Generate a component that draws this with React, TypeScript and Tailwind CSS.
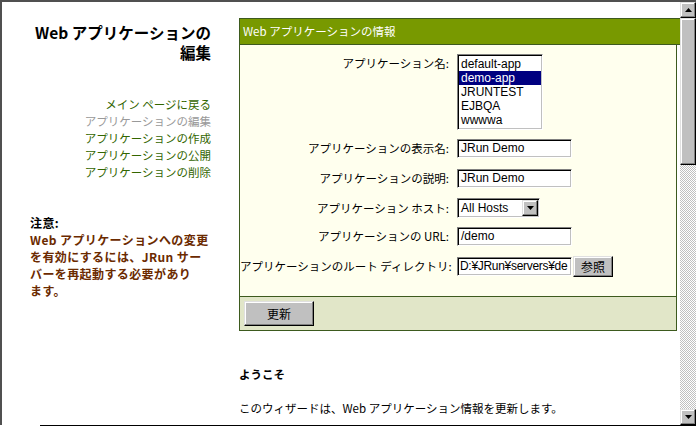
export default function App() {
  const inset =
    "border border-t-[#808080] border-l-[#808080] border-b-white border-r-white shadow-[inset_1px_1px_0_#000,inset_-1px_-1px_0_#c0c0c0]";
  const outset =
    "bg-[#c0c0c0] border border-t-[#e0e0e0] border-l-[#e0e0e0] border-b-black border-r-black shadow-[inset_-1px_-1px_0_#808080,inset_1px_1px_0_#ffffff]";
  const latin = "font-['Liberation_Sans','Noto_Sans_CJK_JP',sans-serif] text-[12px]";

  const Row = ({ label, children }: { label: string; children: React.ReactNode }) => (
    <div className="flex items-center">
      <div className="w-[209px] text-right whitespace-nowrap">{label}</div>
      <div className="ml-[8px] flex items-center">{children}</div>
    </div>
  );

  const TextBox = ({ value, tight }: { value: string; tight?: boolean }) => (
    <div
      className={`${inset} ${latin} w-[115px] h-[19px] bg-white ${tight ? "pl-[2px] tracking-[-0.3px]" : "pl-[3px]"} leading-[16px] whitespace-nowrap overflow-hidden`}
    >
      {value}
    </div>
  );

  const Arrow = ({ up }: { up?: boolean }) => (
    <svg width="7" height="4" viewBox="0 0 7 4">
      {up ? <polygon points="3.5,0 7,4 0,4" fill="#000" /> : <polygon points="0,0 7,0 3.5,4" fill="#000" />}
    </svg>
  );

  return (
    <div className="w-[696px] h-[426px] bg-white overflow-hidden font-['Noto_Sans_CJK_JP',sans-serif] text-[11.5px] leading-[17px] text-black">
      <div className="flex h-[425px] border-t-2 border-l-2 border-t-[#505050] border-l-[#505050]">
        {/* left column */}
        <div className="w-[237px] shrink-0 pt-[20px] pl-[28px] pr-[28px]">
          <div className="text-right text-[15.5px] leading-[20px] font-bold whitespace-nowrap">
            Web アプリケーションの
            <br />
            編集
          </div>
          <div className="mt-[34px] flex flex-col text-right whitespace-nowrap">
            <span className="text-[#336600]">メイン ページに戻る</span>
            <span className="text-[#999999]">アプリケーションの編集</span>
            <span className="text-[#336600]">アプリケーションの作成</span>
            <span className="text-[#336600]">アプリケーションの公開</span>
            <span className="text-[#336600]">アプリケーションの削除</span>
          </div>
          <div className="mt-[33px] font-bold text-[12px] tracking-[0.4px] leading-[17px] whitespace-nowrap">
            <div>注意:</div>
            <div className="text-[#6b2a00]">
              Web アプリケーションへの変更
              <br />
              を有効にするには、JRun サー
              <br />
              バーを再起動する必要があり
              <br />
              ます。
            </div>
          </div>
        </div>

        {/* right column */}
        <div className="w-[441px] shrink-0 pt-[16px]">
          <div className="h-[27px] bg-[#789900] border border-r-0 border-[#3d5a1e] text-white pl-[3px] flex items-center whitespace-nowrap">
            Web アプリケーションの情報
          </div>
          <div className="w-[438px] h-[251px] bg-[#ffffee] border-l border-r border-[#3d5a1e] pt-[9px]">
            <div className="flex items-start">
              <div className="w-[209px] text-right whitespace-nowrap pt-[1px]">アプリケーション名:</div>
              <div className={`ml-[8px] ${inset} w-[86px] h-[76px] bg-white pt-[2px] px-[1px] overflow-hidden ${latin} leading-[14px]`}>
                <div className="h-[14px] pl-[2px]">default-app</div>
                <div className="h-[14px] pl-[2px] bg-[#000080] text-white">demo-app</div>
                <div className="h-[14px] pl-[2px]">JRUNTEST</div>
                <div className="h-[14px] pl-[2px]">EJBQA</div>
                <div className="h-[14px] pl-[2px]">wwwwa</div>
              </div>
            </div>
            <div className="mt-[9px]">
              <Row label="アプリケーションの表示名:">
                <TextBox value="JRun Demo" />
              </Row>
            </div>
            <div className="mt-[11px]">
              <Row label="アプリケーションの説明:">
                <TextBox value="JRun Demo" />
              </Row>
            </div>
            <div className="mt-[10px]">
              <Row label="アプリケーション ホスト:">
                <div className={`${inset} ${latin} w-[83px] h-[20px] bg-white flex items-center justify-between pl-[3px] pr-[1px]`}>
                  <span className="leading-[16px]">All Hosts</span>
                  <div className={`${outset} w-[16px] h-[16px] flex items-center justify-center`}>
                    <Arrow />
                  </div>
                </div>
              </Row>
            </div>
            <div className="mt-[9px]">
              <Row label="アプリケーションの URL:">
                <TextBox value="/demo" />
              </Row>
            </div>
            <div className="mt-[10px]">
              <Row label="アプリケーションのルート ディレクトリ:">
                <div className="flex items-center h-[21px]">
                  <TextBox value="D:¥JRun¥servers¥de" tight />
                  <div className={`${outset} ml-[1px] w-[40px] h-[21px] flex items-center justify-center text-[12px]`}>参照</div>
                </div>
              </Row>
            </div>
          </div>
          <div className="w-[438px] h-[35px] bg-[#e1e6c8] border border-[#3d5a1e] pl-[4px] pt-[4px]">
            <div className={`${outset} w-[70px] h-[25px] flex items-center justify-center text-[12px]`}>更新</div>
          </div>
          <div className="mt-[35px] font-bold whitespace-nowrap">ようこそ</div>
          <div className="mt-[17px] whitespace-nowrap">このウィザードは、Web アプリケーション情報を更新します。</div>
        </div>

        {/* scrollbar */}
        <div className="w-[16px] shrink-0 flex flex-col">
          <div className={`${outset} h-[16px] flex items-center justify-center`}>
            <Arrow up />
          </div>
          <div className={`${outset} h-[147px]`} />
          <div className="flex-1 bg-[repeating-conic-gradient(#c0c0c0_0_25%,#ffffff_0_50%)] bg-[length:2px_2px]" />
          <div className={`${outset} h-[16px] flex items-center justify-center`}>
            <Arrow />
          </div>
        </div>
      </div>
      <div className="ml-[40px] h-px bg-black" />
    </div>
  );
}
